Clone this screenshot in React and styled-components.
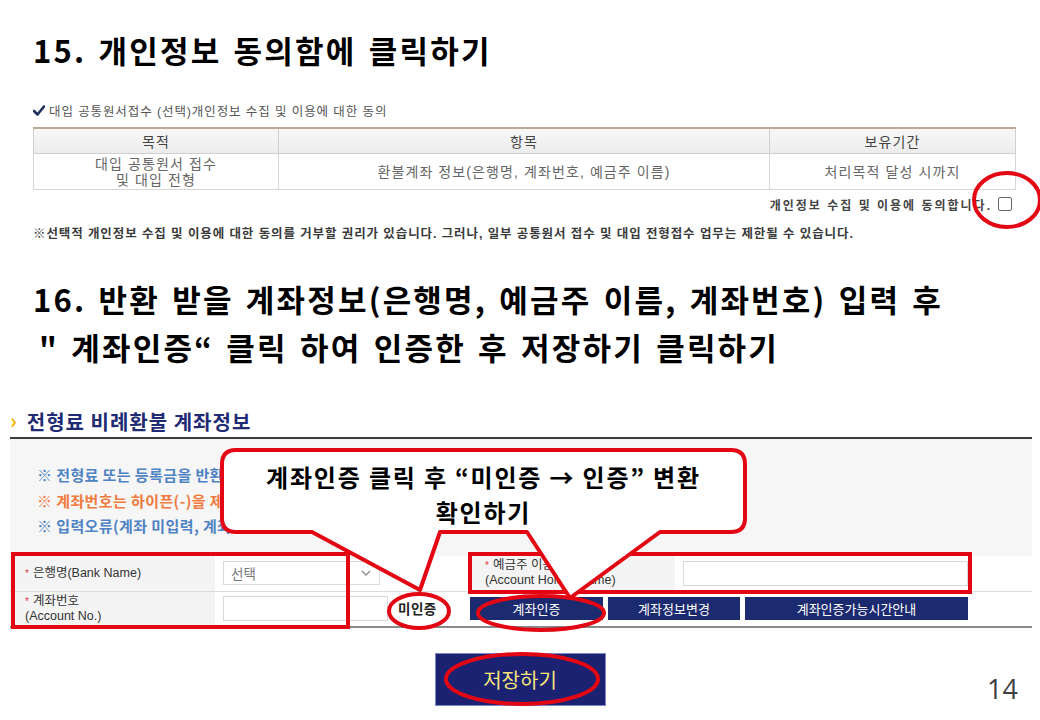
import React from "react";
import styled, { createGlobalStyle } from "styled-components";

const GlobalStyle = createGlobalStyle`
  html, body {
    margin: 0;
    padding: 0;
    background: #ffffff;
  }
  body {
    font-family: "Noto Sans CJK KR", "Noto Sans", sans-serif;
  }
`;

const KR = `"Noto Sans CJK KR", "Noto Sans", sans-serif`;
const SMALL = `"Liberation Sans", "Noto Sans CJK KR", sans-serif`;

const Slide = styled.div`
  position: relative;
  width: 1040px;
  height: 720px;
  overflow: hidden;
  background: #fff;
  padding-top: 30px;
  box-sizing: border-box;
`;

const StepTitle = styled.h1`
  margin: 0;
  padding-left: 33px;
  font-family: ${KR};
  font-size: 31px;
  font-weight: 700;
  line-height: ${(p) => p.$lh || 40}px;
  color: #000;
  letter-spacing: 2.2px;
  word-spacing: 3px;
  white-space: nowrap;
`;

const SecondLine = styled.span`
  display: block;
  padding-left: ${(p) => p.$indent}px;
`;

/* ---------- consent block ---------- */

const Consent = styled.section`
  margin: 32px 24px 0 33px;
  font-family: ${SMALL};
`;

const CheckLine = styled.div`
  display: flex;
  align-items: center;
  gap: 4px;
  height: 16px;
  font-size: 12.5px;
  letter-spacing: 0.9px;
  color: #555;
`;

const ConsentTable = styled.table`
  margin-top: 9px;
  width: 983px;
  border-collapse: collapse;
  table-layout: fixed;
  font-size: 14px;
  letter-spacing: 1.1px;
  color: #666;
  text-align: center;
  border-top: 2px solid #b8ab93;

  th {
    height: 24px;
    padding: 0;
    font-weight: 400;
    color: #444;
    background: linear-gradient(#f7f7f7, #ececec);
    border: 1px solid #cfcfcf;
    border-top: none;
  }
  td {
    height: 35px;
    padding: 0;
    line-height: 16px;
    border: 1px solid #d6d6d6;
  }
`;

const AgreeLine = styled.div`
  display: flex;
  justify-content: flex-end;
  align-items: center;
  gap: 6px;
  height: 20px;
  margin-top: 4px;
  padding-right: 4px;
  font-size: 12px;
  font-weight: 700;
  letter-spacing: 2px;
  color: #444;
`;

const CheckBox = styled.span`
  display: inline-block;
  width: 12px;
  height: 12px;
  border: 1px solid #666;
  border-radius: 2px;
  background: #fff;
`;

const Notice = styled.p`
  margin: 12px 0 0;
  font-size: 12.5px;
  font-weight: 700;
  line-height: 16px;
  letter-spacing: 0.9px;
  color: #3a3a3a;
  white-space: nowrap;
`;

/* ---------- refund account block ---------- */

const Refund = styled.section`
  margin: 35px 8px 0 10px;
`;

const RefundHeader = styled.div`
  display: flex;
  align-items: center;
  gap: 9px;
  height: 31px;
  border-bottom: 2px solid #3c3c3c;
  font-family: ${KR};
  font-size: 20px;
  font-weight: 700;
  letter-spacing: 1px;
  color: #1f2b74;
`;

const Chevron = styled.span`
  color: #f2b705;
  font-size: 21px;
  font-weight: 700;
  line-height: 1;
  margin-top: -2px;
`;

const Panel = styled.div`
  background: #f6f6f6;
  padding: 23px 0 17px 27px;
`;

const Hint = styled.div`
  font-family: ${KR};
  font-size: 15px;
  font-weight: 700;
  line-height: 25.5px;
  letter-spacing: 0.4px;
  color: ${(p) => (p.$warn ? "#f07b3f" : "#4f82c3")};
  white-space: nowrap;
`;

const FormGrid = styled.div`
  display: grid;
  grid-template-columns: 205px 255px 205px 1fr;
  grid-template-rows: 36px 34px;
  border-bottom: 2px solid #8a8a8a;
  font-family: ${SMALL};
`;

const Cell = styled.div`
  display: flex;
  align-items: center;
  gap: ${(p) => p.$gap || 0}px;
  padding-left: ${(p) => p.$pad || 0}px;
  background: ${(p) => (p.$label ? "#f4f4f4" : "#fff")};
  border-bottom: ${(p) => (p.$top ? "1px solid #dcdcdc" : "none")};
  grid-column: ${(p) => p.$span || "auto"};
  font-size: 12.5px;
  line-height: 15px;
  color: #333;
`;

const Req = styled.span`
  color: #e0393e;
  font-size: 10px;
  margin-right: 4px;
`;

const Select = styled.div`
  display: flex;
  align-items: center;
  justify-content: space-between;
  box-sizing: border-box;
  width: 157px;
  height: 24px;
  margin-left: 8px;
  padding: 0 8px 0 7px;
  border: 1px solid #d9d9d9;
  background: #fff;
  font-family: ${KR};
  font-size: 13.5px;
  color: #777;
`;

const TextInput = styled.div`
  box-sizing: border-box;
  width: ${(p) => p.$w}px;
  height: 25px;
  margin-left: 8px;
  border: 1px solid #d9d9d9;
  background: #fff;
`;

const Status = styled.span`
  margin-left: 10px;
  font-family: ${KR};
  font-weight: 700;
  font-size: 13.5px;
  letter-spacing: 0.5px;
  color: #222;
`;

const NavyButton = styled.div`
  display: flex;
  align-items: center;
  justify-content: center;
  width: ${(p) => p.$w}px;
  height: 23px;
  background: #1c2a70;
  color: #fff;
  font-family: ${KR};
  font-size: 13px;
`;

const Footer = styled.div`
  display: grid;
  grid-template-columns: 1fr auto 1fr;
  align-items: center;
  margin-top: 24px;
`;

const SaveButton = styled.div`
  grid-column: 2;
  display: flex;
  align-items: center;
  justify-content: center;
  width: 171px;
  height: 53px;
  box-sizing: border-box;
  background: #1b2271;
  border: 1px solid #7c88c8;
  font-family: ${KR};
  font-size: 20px;
  color: #f3e37c;
`;

const PageNo = styled.div`
  justify-self: end;
  padding: 18px 22px 0 0;
  font-family: "Open Sans", "Noto Sans", sans-serif;
  font-size: 27px;
  color: #404040;
`;

/* ---------- annotations (drawn over the screenshot) ---------- */

const Marks = styled.svg`
  position: absolute;
  left: 0;
  top: 0;
  width: 1040px;
  height: 720px;
  pointer-events: none;
`;

const CalloutText = styled.div`
  position: absolute;
  left: 222px;
  top: 459px;
  width: 523px;
  text-align: center;
  font-family: ${KR};
  font-size: 24px;
  font-weight: 700;
  letter-spacing: 1.8px;
  color: #000;
`;

const CalloutLine = styled.div`
  line-height: 35px;
`;

const CheckIcon = () => (
  <svg width="12" height="11" viewBox="0 0 12 11">
    <path d="M1 6 L4.5 9.5 L11 1.5" fill="none" stroke="#1f2d5a" strokeWidth="2.6" strokeLinecap="round" strokeLinejoin="round" />
  </svg>
);

const DownIcon = () => (
  <svg width="10" height="6" viewBox="0 0 10 6">
    <path d="M1 1 L5 5 L9 1" fill="none" stroke="#999" strokeWidth="1.6" />
  </svg>
);

const RED = "#e30613";

export default function App() {
  return (
    <>
      <GlobalStyle />
      <Slide>
        <StepTitle>15. 개인정보 동의함에 클릭하기</StepTitle>

        <Consent>
          <CheckLine>
            <CheckIcon />
            대입 공통원서접수 (선택)개인정보 수집 및 이용에 대한 동의
          </CheckLine>
          <ConsentTable>
            <colgroup>
              <col style={{ width: 245 }} />
              <col style={{ width: 491 }} />
              <col />
            </colgroup>
            <thead>
              <tr>
                <th>목적</th>
                <th>항목</th>
                <th>보유기간</th>
              </tr>
            </thead>
            <tbody>
              <tr>
                <td>
                  대입 공통원서 접수
                  <br />및 대입 전형
                </td>
                <td>환불계좌 정보(은행명, 계좌번호, 예금주 이름)</td>
                <td>처리목적 달성 시까지</td>
              </tr>
            </tbody>
          </ConsentTable>
          <AgreeLine>
            개인정보 수집 및 이용에 동의합니다.
            <CheckBox />
          </AgreeLine>
          <Notice>
            ※선택적 개인정보 수집 및 이용에 대한 동의를 거부할 권리가 있습니다. 그러나, 일부 공통원서 접수 및 대입 전형접수 업무는 제한될 수 있습니다.
          </Notice>
        </Consent>

        <StepTitle as="h2" $lh={48} style={{ marginTop: 33 }}>
          16. 반환 받을 계좌정보(은행명, 예금주 이름, 계좌번호) 입력 후
          <SecondLine $indent={6}>" 계좌인증“ 클릭 하여 인증한 후 저장하기 클릭하기</SecondLine>
        </StepTitle>

        <Refund>
          <RefundHeader>
            <Chevron>›</Chevron>
            전형료 비례환불 계좌정보
          </RefundHeader>
          <Panel>
            <Hint>※ 전형료 또는 등록금을 반환</Hint>
            <Hint $warn>※ 계좌번호는 하이픈(-)을 제외</Hint>
            <Hint>※ 입력오류(계좌 미입력, 계좌</Hint>
          </Panel>
          <FormGrid>
            <Cell $label $top $pad={15}>
              <span>
                <Req>*</Req>은행명(Bank Name)
              </span>
            </Cell>
            <Cell $top>
              <Select>
                선택
                <DownIcon />
              </Select>
            </Cell>
            <Cell $label $top $pad={15}>
              <span>
                <Req>*</Req>예금주 이름
                <br />
                (Account Holder Name)
              </span>
            </Cell>
            <Cell $top>
              <TextInput $w={285} />
            </Cell>

            <Cell $label $pad={15}>
              <span>
                <Req>*</Req>계좌번호
                <br />
                (Account No.)
              </span>
            </Cell>
            <Cell>
              <TextInput $w={165} />
              <Status>미인증</Status>
            </Cell>
            <Cell $span="span 2" $gap={5}>
              <NavyButton $w={133}>계좌인증</NavyButton>
              <NavyButton $w={132}>계좌정보변경</NavyButton>
              <NavyButton $w={223}>계좌인증가능시간안내</NavyButton>
            </Cell>
          </FormGrid>
        </Refund>

        <Footer>
          <SaveButton>저장하기</SaveButton>
          <PageNo>14</PageNo>
        </Footer>

        <Marks viewBox="0 0 1040 720">
          <g fill="none" stroke={RED} strokeWidth="4">
            <ellipse cx="1007" cy="200" rx="33" ry="27" />
            <rect x="13" y="554" width="335" height="73" />
            <rect x="470" y="554" width="500" height="38" />
            <ellipse cx="419" cy="611" rx="30" ry="17" />
            <ellipse cx="541" cy="613" rx="63" ry="17" />
            <ellipse cx="522" cy="679" rx="76" ry="25" />
          </g>
          <path
            d="M236 450 H731 Q745 450 745 464 V518 Q745 532 731 532 H660 L570 598 L527 532 H440 L420 590 L312 532 H236 Q222 532 222 518 V464 Q222 450 236 450 Z"
            fill="#fff"
            stroke={RED}
            strokeWidth="4"
            strokeLinejoin="round"
          />
        </Marks>
        <CalloutText>
          <CalloutLine>계좌인증 클릭 후 “미인증 → 인증” 변환</CalloutLine>
          <CalloutLine>확인하기</CalloutLine>
        </CalloutText>
      </Slide>
    </>
  );
}
